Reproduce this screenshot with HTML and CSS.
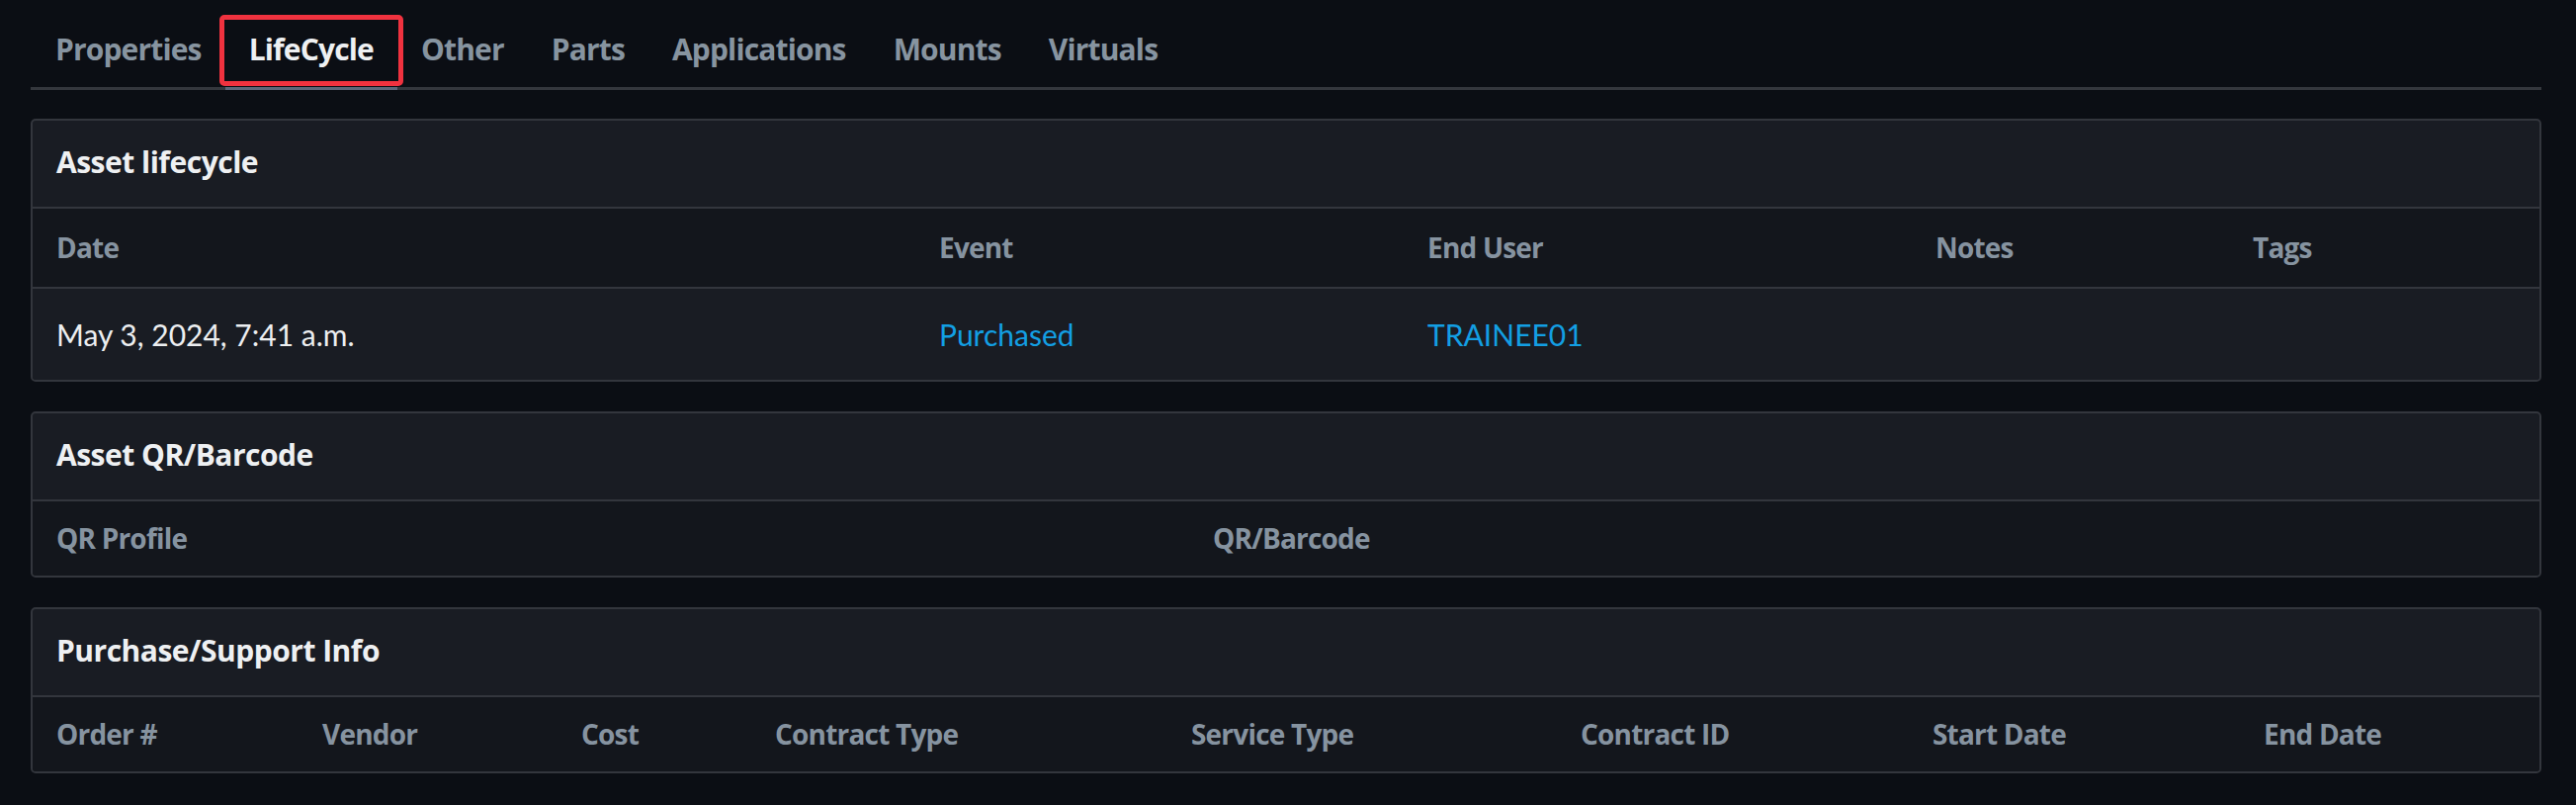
FILE: index.html
```html
<!DOCTYPE html>
<html lang="en">
<head>
<meta charset="utf-8">
<title>Asset LifeCycle</title>
<link rel="stylesheet" href="styles.css">
</head>
<body>
<div class="page">
  <nav class="tabs">
    <a class="tab">Properties</a>
    <a class="tab active">LifeCycle<span class="focus-ring"></span></a>
    <a class="tab">Other</a>
    <a class="tab">Parts</a>
    <a class="tab">Applications</a>
    <a class="tab">Mounts</a>
    <a class="tab">Virtuals</a>
  </nav>

  <section class="card">
    <h2 class="card-head">Asset lifecycle</h2>
    <table class="grid grid-tall">
      <colgroup>
        <col class="c893"><col class="c494"><col class="c514"><col class="c321"><col>
      </colgroup>
      <thead>
        <tr><th>Date</th><th>Event</th><th>End User</th><th>Notes</th><th>Tags</th></tr>
      </thead>
      <tbody>
        <tr><td>May 3, 2024, 7:41 a.m.</td><td><a class="link">Purchased</a></td><td><a class="link">TRAINEE01</a></td><td></td><td></td></tr>
      </tbody>
    </table>
  </section>

  <section class="card">
    <h2 class="card-head">Asset QR/Barcode</h2>
    <table class="grid">
      <colgroup>
        <col class="c1170"><col>
      </colgroup>
      <thead>
        <tr><th>QR Profile</th><th>QR/Barcode</th></tr>
      </thead>
    </table>
  </section>

  <section class="card">
    <h2 class="card-head">Purchase/Support Info</h2>
    <table class="grid">
      <colgroup>
        <col class="c269"><col class="c262"><col class="c196"><col class="c421"><col class="c393"><col class="c356"><col class="c335"><col>
      </colgroup>
      <thead>
        <tr><th>Order #</th><th>Vendor</th><th>Cost</th><th>Contract Type</th><th>Service Type</th><th>Contract ID</th><th>Start Date</th><th>End Date</th></tr>
      </thead>
    </table>
  </section>
</div>
</body>
</html>
```

FILE: styles.css
```css
* { box-sizing: border-box; }

html, body {
  margin: 0;
  padding: 0;
  background: #0b0e14;
}

body {
  font-family: "Open Sans", "Noto Sans", sans-serif;
  color: #eceef0;
}

.page {
  padding: 0 35px 30px 31px;
  display: flex;
  flex-direction: column;
  gap: 30px;
}

/* Tabs */
.tabs {
  display: flex;
  border-bottom: 3px solid #34373d;
  margin-bottom: -1px;
  padding-left: 1px;
}

.tab {
  position: relative;
  display: block;
  padding: 30px 24px 18px;
  line-height: 40px;
  font-size: 30px;
  font-weight: 700;
  letter-spacing: -0.85px;
  color: #8794a0;
  text-decoration: none;
  cursor: pointer;
}

.tab.active {
  color: #eef0f2;
  border-bottom: 3px solid #5c6679;
  margin-bottom: -3px;
}

.focus-ring {
  position: absolute;
  left: -6px;
  right: -6px;
  top: 15px;
  bottom: 1px;
  border: 5px solid #f0323f;
  border-radius: 5px;
  pointer-events: none;
}

/* Cards */
.card {
  border: 2px solid #33363d;
  border-radius: 5px;
  background: #191c23;
  overflow: hidden;
}

.card-head {
  margin: 0;
  padding: 22px 24px 25px;
  line-height: 40px;
  font-size: 30px;
  font-weight: 700;
  letter-spacing: -0.5px;
  color: #eef0f2;
  border-bottom: 2px solid #33363d;
}

.grid {
  width: 100%;
  border-collapse: collapse;
  table-layout: fixed;
}

.grid th {
  background: #13161c;
  text-align: left;
  padding: 17px 0 18px 24px;
  line-height: 40px;
  font-size: 28px;
  font-weight: 700;
  letter-spacing: -0.8px;
  color: #8693a0;
  white-space: nowrap;
}

.grid-tall th {
  padding: 19px 0 20px 24px;
  border-bottom: 2px solid #33363d;
}

.grid td {
  background: #191c23;
  padding: 26px 0 26px 24px;
  line-height: 40px;
  font-family: "Lato", "Noto Sans", sans-serif;
  font-size: 30px;
  font-weight: 400;
  color: #eceef0;
  white-space: nowrap;
}

.link {
  color: #139fe3;
  text-decoration: none;
  cursor: pointer;
}

/* column widths */
.c893 { width: 893px; }
.c494 { width: 494px; }
.c514 { width: 514px; }
.c321 { width: 321px; }
.c1170 { width: 1170px; }
.c269 { width: 269px; }
.c262 { width: 262px; }
.c196 { width: 196px; }
.c421 { width: 421px; }
.c393 { width: 394px; }
.c356 { width: 356px; }
.c335 { width: 335px; }
```
